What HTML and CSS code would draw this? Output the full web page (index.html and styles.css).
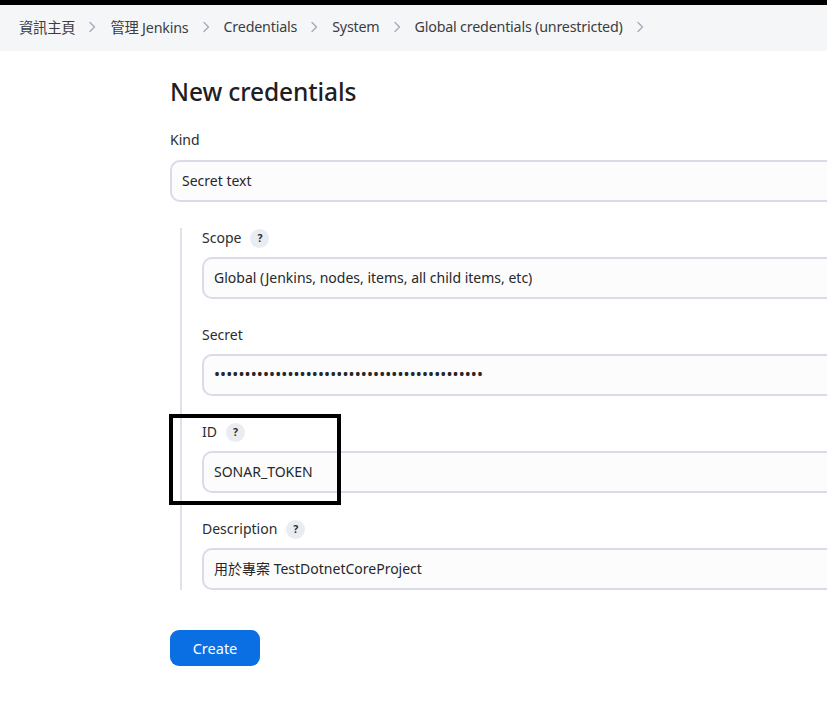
FILE: index.html
```html
<!DOCTYPE html>
<html lang="zh-Hant">
<head>
<meta charset="utf-8">
<title>New credentials</title>
<link rel="stylesheet" href="styles.css">
</head>
<body>
<div class="topbar"></div>
<nav class="breadcrumbs">
  <span class="crumb">資訊主頁</span><svg class="chev" viewBox="0 0 8 12" width="8" height="12"><path d="M2 1.5 L6.5 6 L2 10.5" fill="none" stroke="#a3abbb" stroke-width="1.4" stroke-linecap="round" stroke-linejoin="round"/></svg>
  <span class="crumb">管理 Jenkins</span><svg class="chev" viewBox="0 0 8 12" width="8" height="12"><path d="M2 1.5 L6.5 6 L2 10.5" fill="none" stroke="#a3abbb" stroke-width="1.4" stroke-linecap="round" stroke-linejoin="round"/></svg>
  <span class="crumb">Credentials</span><svg class="chev" viewBox="0 0 8 12" width="8" height="12"><path d="M2 1.5 L6.5 6 L2 10.5" fill="none" stroke="#a3abbb" stroke-width="1.4" stroke-linecap="round" stroke-linejoin="round"/></svg>
  <span class="crumb">System</span><svg class="chev" viewBox="0 0 8 12" width="8" height="12"><path d="M2 1.5 L6.5 6 L2 10.5" fill="none" stroke="#a3abbb" stroke-width="1.4" stroke-linecap="round" stroke-linejoin="round"/></svg>
  <span class="crumb">Global credentials (unrestricted)</span><svg class="chev" viewBox="0 0 8 12" width="8" height="12"><path d="M2 1.5 L6.5 6 L2 10.5" fill="none" stroke="#a3abbb" stroke-width="1.4" stroke-linecap="round" stroke-linejoin="round"/></svg>
</nav>
<main class="main">
  <h1 class="title">New credentials</h1>
  <div class="field">
    <div class="label">Kind</div>
    <div class="input">Secret text</div>
  </div>
  <div class="nested">
    <div class="field">
      <div class="label">Scope <span class="help">?</span></div>
      <div class="input">Global (Jenkins, nodes, items, all child items, etc)</div>
    </div>
    <div class="field">
      <div class="label">Secret</div>
      <div class="input dots">••••••••••••••••••••••••••••••••••••••••••••</div>
    </div>
    <div class="field">
      <div class="label">ID <span class="help">?</span></div>
      <div class="input">SONAR_TOKEN</div>
    </div>
    <div class="field">
      <div class="label">Description <span class="help">?</span></div>
      <div class="input">用於專案 TestDotnetCoreProject</div>
    </div>
  </div>
  <button class="btn">Create</button>
</main>
<div class="highlight"></div>
</body>
</html>
```
FILE: styles.css
```css
html, body {
  margin: 0;
  padding: 0;
  overflow: hidden;
  background: #ffffff;
}
body {
  font-family: "Noto Sans", "Noto Sans CJK TC", sans-serif;
  color: #1f2023;
  width: 827px;
  height: 715px;
  position: relative;
}
.topbar {
  height: 5px;
  background: #000;
}
.breadcrumbs {
  height: 46px;
  box-sizing: border-box;
  padding-bottom: 3px;
  background: #f5f6f8;
  display: flex;
  align-items: center;
  padding-left: 19px;
  font-size: 14.3px;
  color: #3b3d42;
}
.crumb {
  letter-spacing: -0.2px;
}
.chev {
  margin: 1px 14px 0 13px;
  flex: none;
}
.main {
  padding-left: 170px;
}
.title {
  font-size: 24.5px;
  font-weight: 500;
  margin: 25px 0 0 0;
  line-height: 32px;
  letter-spacing: -0.1px;
}
.field {
  margin-top: 26px;
}
.title + .field {
  margin-top: 22px;
}
.label {
  font-size: 14px;
  line-height: 20px;
  height: 20px;
  display: flex;
  align-items: center;
  color: #2b2c30;
}
.help {
  display: inline-flex;
  align-items: center;
  justify-content: center;
  width: 19px;
  height: 19px;
  border-radius: 50%;
  background: #e9ecf1;
  font-size: 10.5px;
  font-weight: 700;
  color: #2a2c33;
  margin-left: 9px;
}
.input {
  margin-top: 10px;
  width: 760px;
  height: 42px;
  box-sizing: border-box;
  border: 2px solid #d9dce8;
  border-radius: 10px;
  background: #fcfcfd;
  display: flex;
  align-items: center;
  padding-left: 10px;
  padding-bottom: 2px;
  font-size: 14px;
  color: #26272b;
  white-space: nowrap;
}
.nested .input {
  margin-top: 9px;
}
.dots {
  font-size: 16px;
  letter-spacing: 0.1px;
}
.nested {
  margin-left: 10px;
  border-left: 2px solid #dfe2ea;
  padding-left: 20px;
  margin-top: 26px;
}
.nested .field:first-child {
  margin-top: 0;
}
.nested .field {
  margin-top: 26px;
}
.btn {
  margin-top: 40px;
  width: 90px;
  height: 36px;
  border: none;
  border-radius: 9px;
  background: #0b6fe4;
  color: #fff;
  font-family: "Noto Sans", sans-serif;
  font-size: 14.5px;
  font-weight: 400;
  padding-bottom: 2px;
}
.highlight {
  position: absolute;
  left: 169px;
  top: 414px;
  width: 172px;
  height: 91px;
  box-sizing: border-box;
  border: 4px solid #000;
}
```
